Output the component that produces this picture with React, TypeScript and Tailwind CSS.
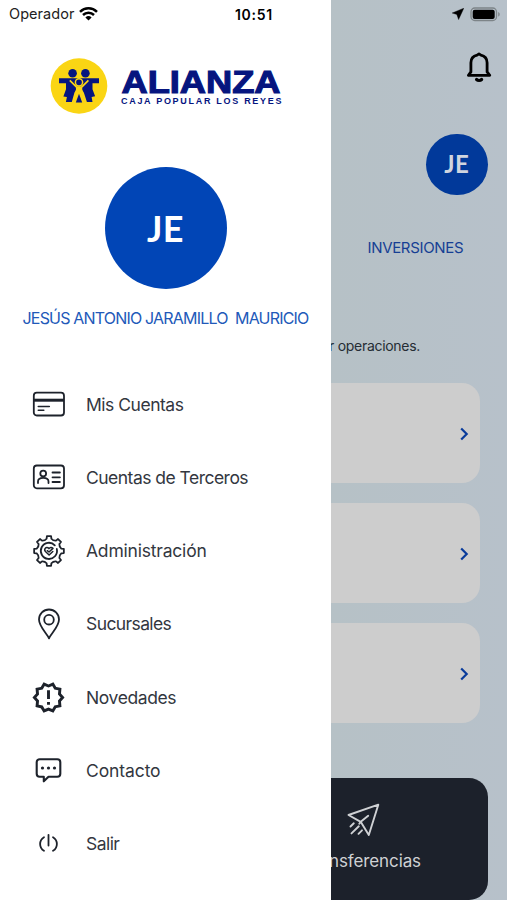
import type { ReactNode } from 'react';
import { MdOutlineNewReleases } from 'react-icons/md';

const stroke = {
  fill: 'none',
  stroke: 'currentColor',
  strokeLinecap: 'round' as const,
  strokeLinejoin: 'round' as const,
};

function Wifi() {
  return (
    <svg width="19" height="14" viewBox="0 0 19 14" fill="none" stroke="#000" strokeWidth="2.5">
      <path d="M1 4.8a12.2 12.2 0 0 1 17 0" />
      <path d="M4 8a8 8 0 0 1 11 0" />
      <path d="M9.5 13.6 6.4 10.5a4.5 4.5 0 0 1 6.2 0Z" fill="#000" stroke="none" />
    </svg>
  );
}

function Family() {
  return (
    <svg width="58" height="56" viewBox="0 0 58 56">
      <ellipse cx="29" cy="28" rx="28.3" ry="27.7" fill="#fad514" />
      <g fill="#06157f">
        <circle cx="22.6" cy="15.2" r="4.3" />
        <circle cx="35.4" cy="15.2" r="4.3" />
        <path d="M9 20.3h40v5h-6.5v5.900l2.600 7.100-3.500.6.900 5.200h-5.600l-3-9.300-3.600-6.300h-2.600l-3.300 6.300-2.600 9.300h-5.900l1-5-3.500-.7 2.600-7.200v-5.900H9Z" />
      </g>
      <path d="m19.800 22.400 7 7v6.200l-3.400 9.600M38.400 22.400l-7 7v6.200l3.400 9.600" fill="none" stroke="#fad514" strokeWidth="1.700" />
      <path d="M26.300 28.600h5.600v6.400l2.700 9.600H23.600l2.700-9.600Z" fill="#fad514" />
      <circle cx="29" cy="24.300" r="3.600" fill="#06157f" stroke="#fad514" strokeWidth="1.500" />
      <path d="m29 35.800 3.200 8.600h-6.400Z" fill="#06157f" />
    </svg>
  );
}

function Wordmark() {
  return (
    <svg width="164" height="40" viewBox="0 0 164 40" fill="#06157f" className="font-['Liberation_Sans',Arial,sans-serif] font-bold">
      <text x="1.500" y="26.700" fontSize="31" stroke="#06157f" strokeWidth="1.100" textLength="159" lengthAdjust="spacingAndGlyphs">ALIANZA</text>
      <text x="1" y="37.500" fontSize="9" textLength="160.500" lengthAdjust="spacing">CAJA POPULAR LOS REYES</text>
    </svg>
  );
}

function CardIcon() {
  return (
    <svg width="34" height="34" viewBox="0 0 34 34" {...stroke} strokeWidth="1.8">
      <rect x="1.8" y="5.7" width="30.2" height="22.8" rx="3" />
      <path d="M2 13.2h30" strokeWidth="3" strokeLinecap="butt" />
      <path d="M6.3 19.5h11M6.3 23.3h5.5" strokeWidth="1.6" />
    </svg>
  );
}

function IdIcon() {
  return (
    <svg width="34" height="34" viewBox="0 0 34 34" {...stroke} strokeWidth="1.8">
      <rect x="1.8" y="5.5" width="30.2" height="22.8" rx="3" />
      <circle cx="11.2" cy="13.6" r="2.9" />
      <path d="M6 23v-1.500c0-2.100 2-3.700 5.200-3.700s5.300 1.600 5.300 3.700V23M20.500 12.500h7.400M20.500 17.300h7.400M20.500 22h7.400" />
    </svg>
  );
}

const gearPoint = (radius: number, degrees: number) => {
  const a = (degrees * Math.PI) / 180;
  return `${(17 + radius * Math.cos(a)).toFixed(2)} ${(17 + radius * Math.sin(a)).toFixed(2)}`;
};

const gearPath =
  Array.from({ length: 8 }, (_, i) => {
    const c = i * 45;
    return `${i ? 'L' : 'M'}${gearPoint(12.5, c - 11)}L${gearPoint(15, c - 8)}L${gearPoint(15, c + 8)}L${gearPoint(12.5, c + 11)}Q${gearPoint(11, c + 22.5)} ${gearPoint(12.5, c + 34)}`;
  }).join('') + 'Z';

function GearIcon() {
  return (
    <svg width="34" height="34" viewBox="0 0 34 34" {...stroke} strokeWidth="1.8">
      <path d={gearPath} />
      <path d="M22.800 11.300A8.100 8.100 0 1 0 24.800 15" />
      <path d="m15.300 16.700 1.700 1.300 4-3.600c-1.500-1.500-3-.9-4 .2-1.400-1.500-3-1.200-3.800-.2-.9 1.200-.5 2.400.5 3.400l3.400 3.200 3.700-3.500" strokeWidth="1.500" />
    </svg>
  );
}

function PinIcon() {
  return (
    <svg width="34" height="34" viewBox="0 0 34 34" {...stroke} strokeWidth="1.8">
      <path d="M17 31.300c-1.800-4.500-10-11.600-10-18.800a10 10 0 0 1 20 0c0 7.200-8.200 14.300-10 18.800Z" />
      <circle cx="17" cy="12.700" r="4.800" />
    </svg>
  );
}

function ChatIcon() {
  return (
    <svg width="34" height="34" viewBox="0 0 34 34" {...stroke} strokeWidth="2.100">
      <path d="M7.700 5.200h17.600a3 3 0 0 1 3 3v11.600a3 3 0 0 1-3 3h-8.800l-4.700 4.500v-4.500H7.700a3 3 0 0 1-3-3V8.200a3 3 0 0 1 3-3Z" />
      <g fill="currentColor" stroke="none">
        <circle cx="10.500" cy="14" r="1.600" />
        <circle cx="16.500" cy="14" r="1.600" />
        <circle cx="22.500" cy="14" r="1.600" />
      </g>
    </svg>
  );
}

function PowerIcon() {
  return (
    <svg width="34" height="34" viewBox="0 0 34 34" {...stroke} strokeWidth="1.8">
      <path d="M16.500 7.800v10.700M12 10.200a7.900 7.900 0 0 0 0 13.600M21 10.200a7.900 7.900 0 0 1 0 13.600" />
    </svg>
  );
}

function BellIcon() {
  return (
    <svg width="28" height="34" viewBox="0 0 28 34" {...stroke} strokeWidth="2.800">
      <path d="M3.400 25.300h21.400l-2.700-3.400V12.800c0-4.400-3-7-6.200-7.700L14 3.900l-1.900 1.200c-3.200.7-6.200 3.300-6.200 7.700v9.100Z" />
      <path d="M11.600 29.500c1.300 1.300 3.700 1.300 5 0" strokeWidth="3.200" />
    </svg>
  );
}

function PlaneIcon() {
  return (
    <svg width="34" height="34" viewBox="0 0 34 34" {...stroke} strokeWidth="1.900">
      <path d="M31.300 1.700 1.500 12l12.200 6.800L21.800 32Z M13.700 18.800l7.500-6M13.700 18.800l-1.400 2M6.800 20.300l-3.300 3.200M11.800 23.300l-7.300 7.100M15 27.300l-3.500 3.500" />
    </svg>
  );
}

function Avatar({ className }: { className: string }) {
  return (
    <div className={`flex items-center justify-center rounded-full font-['Lato',sans-serif] font-bold ${className}`}>JE</div>
  );
}

const items: { label: string; icon: ReactNode; tracking: string }[] = [
  { label: 'Mis Cuentas', icon: <CardIcon />, tracking: 'tracking-[-0.480px]' },
  { label: 'Cuentas de Terceros', icon: <IdIcon />, tracking: 'tracking-[-0.520px]' },
  { label: 'Administración', icon: <GearIcon />, tracking: 'tracking-[-0.200px]' },
  { label: 'Sucursales', icon: <PinIcon />, tracking: 'tracking-[-0.600px]' },
  { label: 'Novedades', icon: <MdOutlineNewReleases size={35} className="-mx-[0.500px]" />, tracking: 'tracking-[-0.400px]' },
  { label: 'Contacto', icon: <ChatIcon />, tracking: 'tracking-[-0.100px]' },
  { label: 'Salir', icon: <PowerIcon />, tracking: 'tracking-[-0.550px]' },
];

function Drawer() {
  return (
    <aside className="flex w-[331px] shrink-0 flex-col bg-white">
      <div className="flex h-[28px] items-center pl-[9px] text-black">
        <span className="w-[70px] text-[14.500px] tracking-[0.050px] text-[#222]">Operador</span>
        <Wifi />
        <span className="ml-[137px] whitespace-nowrap text-[14px] font-semibold tracking-[0.700px]">10:51</span>
      </div>
      <div className="mt-[30px] flex h-[56px] items-center gap-[12px] pl-[50px]">
        <Family />
        <Wordmark />
      </div>
      <Avatar className="mx-auto mt-[53px] size-[122px] bg-[#0145b6] text-[36px] tracking-[0.500px] text-white" />
      <h1 className="mt-[17px] flex h-[24px] items-center whitespace-pre pl-[22.500px] text-[16px] tracking-[-0.810px] text-[#2259b9]">JESÚS ANTONIO JARAMILLO  MAURICIO</h1>
      <nav className="mt-[37.500px] flex flex-col">
        {items.map((item) => (
          <a key={item.label} className="flex h-[73.300px] items-center pl-[31.500px] text-[#1d222b]">
            {item.icon}
            <span className={`ml-[20.500px] whitespace-nowrap pt-[1px] text-[17.500px] text-[#33373f] ${item.tracking}`}>{item.label}</span>
          </a>
        ))}
      </nav>
    </aside>
  );
}

function Chevron() {
  return (
    <svg width="9" height="14" viewBox="0 0 9 14" fill="none" stroke="#093b9b" strokeWidth="2.2">
      <path d="m1.200 1.500 5.500 5.500-5.500 5.500" />
    </svg>
  );
}

function Dashboard() {
  return (
    <main className="flex w-[176px] flex-col overflow-hidden bg-linear-to-r from-[#b6c1c6] to-[#b7c1ca]">
      <div className="flex h-[28px] items-center justify-end gap-[6px] pr-[6px]">
        <svg width="13" height="12" viewBox="0 0 13 12">
          <path d="M12.800.2 1.200 5l4.600 1.400 1.800 5.200Z" fill="#000" stroke="#000" strokeWidth=".4" />
        </svg>
        <svg width="31" height="15" viewBox="0 0 31 15">
          <rect x="1" y="1" width="25.500" height="12.500" rx="3.800" fill="none" stroke="#7d8488" strokeWidth="1.300" />
          <rect x="2.700" y="2.700" width="22" height="9.200" rx="2" fill="#000" />
          <path d="M28.200 5v4.600c2-.8 2-3.800 0-4.600Z" fill="#7d8488" />
        </svg>
      </div>
      <div className="mt-[22px] flex h-[34px] justify-end pr-[14px] text-black">
        <BellIcon />
      </div>
      <Avatar className="ml-auto mr-[19.500px] mt-[49.500px] size-[61.500px] shrink-0 bg-[#01399a] text-[24px] tracking-[0.400px] text-[#d0d5df]" />
      <div className="mt-[40px] flex h-[24px] items-center whitespace-nowrap pl-[36.500px] pt-[2px] text-[15px] tracking-[-0.330px] text-[#163f94]">INVERSIONES</div>
      <p className="mt-[74px] flex h-[24px] items-center justify-end whitespace-nowrap pr-[87px] text-[14px] tracking-[-0.300px] text-[#252d34]">realizar operaciones.</p>
      <div className="mt-[26px] flex flex-col gap-[20px] pr-[27px]">
        {[1, 2, 3].map((n) => (
          <div key={n} className="flex h-[100px] items-center justify-end rounded-r-[18px] bg-[#cdcdcd] pr-[11.500px] pt-[1px]">
            <Chevron />
          </div>
        ))}
      </div>
      <div className="mr-[19.500px] mt-[55px] flex h-[121.500px] flex-col rounded-r-[19px] bg-[#1c212b] pt-[25px] text-[#cfd1d4]">
        <div className="pl-[15.500px]">
          <PlaneIcon />
        </div>
        <div className="mt-[13px] flex h-[24px] items-center justify-end whitespace-nowrap pr-[66.500px] text-[17px] tracking-[-0.100px]">Transferencias</div>
      </div>
    </main>
  );
}

export default function App() {
  return (
    <div className="flex h-[900px] w-[507px] overflow-hidden font-['Inter','Liberation_Sans',sans-serif]">
      <Drawer />
      <Dashboard />
    </div>
  );
}
